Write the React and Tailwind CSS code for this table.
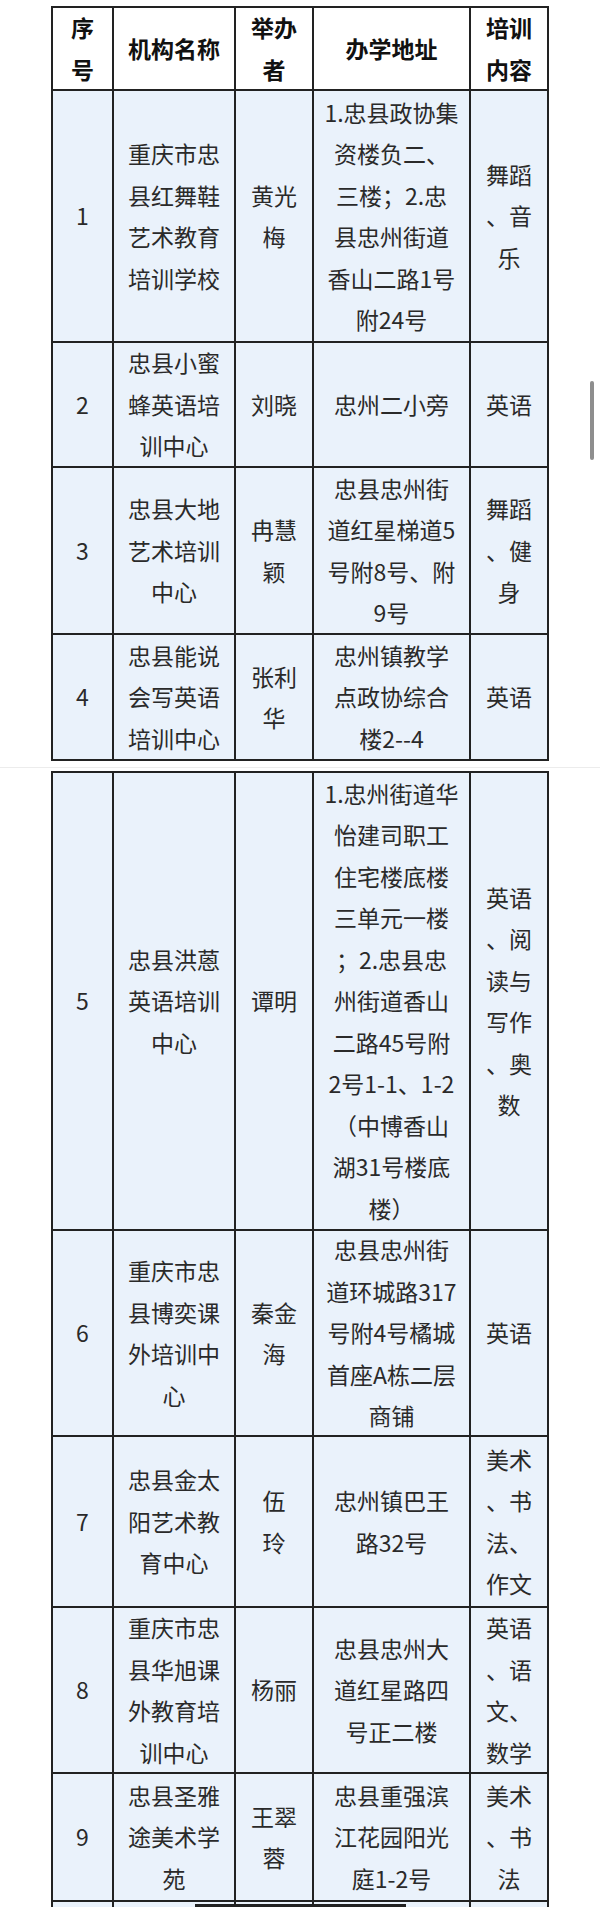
import React from 'react';

// Columns: 序号 / 机构名称 / 举办者 / 办学地址 / 培训内容
const HEADER = [['序', '号'], ['机构名称'], ['举办', '者'], ['办学地址'], ['培训', '内容']];

// First screenshot block (rows 1-4)
const ROWS_TOP = [
  {
    h: 'h-[250px]',
    cells: [
      ['1'],
      ['重庆市忠', '县红舞鞋', '艺术教育', '培训学校'],
      ['黄光', '梅'],
      ['1.忠县政协集', '资楼负二、', '三楼；2.忠', '县忠州街道', '香山二路1号', '附24号'],
      ['舞蹈', '、音', '乐'],
    ],
  },
  {
    h: 'h-[123px]',
    cells: [['2'], ['忠县小蜜', '蜂英语培', '训中心'], ['刘晓'], ['忠州二小旁'], ['英语']],
  },
  {
    h: 'h-[165px]',
    cells: [
      ['3'],
      ['忠县大地', '艺术培训', '中心'],
      ['冉慧', '颖'],
      ['忠县忠州街', '道红星梯道5', '号附8号、附', '9号'],
      ['舞蹈', '、健', '身'],
    ],
  },
  {
    h: 'h-[124px]',
    cells: [
      ['4'],
      ['忠县能说', '会写英语', '培训中心'],
      ['张利', '华'],
      ['忠州镇教学', '点政协综合', '楼2--4'],
      ['英语'],
    ],
  },
];

// Second screenshot block (rows 5-9)
const ROWS_BOTTOM = [
  {
    h: 'h-[456px]',
    cells: [
      ['5'],
      ['忠县洪蒽', '英语培训', '中心'],
      ['谭明'],
      [
        '1.忠州街道华',
        '怡建司职工',
        '住宅楼底楼',
        '三单元一楼',
        '；2.忠县忠',
        '州街道香山',
        '二路45号附',
        '2号1-1、1-2',
        '（中博香山',
        '湖31号楼底',
        '楼）',
      ],
      ['英语', '、阅', '读与', '写作', '、奥', '数'],
    ],
  },
  {
    h: 'h-[204px]',
    cells: [
      ['6'],
      ['重庆市忠', '县博奕课', '外培训中', '心'],
      ['秦金', '海'],
      ['忠县忠州街', '道环城路317', '号附4号橘城', '首座A栋二层', '商铺'],
      ['英语'],
    ],
  },
  {
    h: 'h-[169px]',
    cells: [
      ['7'],
      ['忠县金太', '阳艺术教', '育中心'],
      ['伍', '玲'],
      ['忠州镇巴王', '路32号'],
      ['美术', '、书', '法、', '作文'],
    ],
  },
  {
    h: 'h-[164px]',
    cells: [
      ['8'],
      ['重庆市忠', '县华旭课', '外教育培', '训中心'],
      ['杨丽'],
      ['忠县忠州大', '道红星路四', '号正二楼'],
      ['英语', '、语', '文、', '数学'],
    ],
  },
  {
    h: 'h-[126px]',
    cells: [
      ['9'],
      ['忠县圣雅', '途美术学', '苑'],
      ['王翠', '蓉'],
      ['忠县重强滨', '江花园阳光', '庭1-2号'],
      ['美术', '、书', '法'],
    ],
  },
];

function Cell({ lines, h, head }) {
  return (
    <div
      className={`${h} flex flex-col items-center justify-center ${
        head ? 'bg-white text-[#111] font-bold' : 'bg-[#eaf2fb] text-[#2a2a2a]'
      }`}
    >
      {lines.map((line, i) => (
        <div key={i} className="leading-[41.5px] whitespace-nowrap">
          {line}
        </div>
      ))}
    </div>
  );
}

function Block({ rows, header, tail }) {
  return (
    <div
      className={`ml-[51px] w-[498px] bg-[#222] grid grid-cols-[59px_120px_76px_155px_76px] gap-[2px] ${
        tail ? 'pt-[2px] px-[2px]' : 'p-[2px]'
      }`}
    >
      {header && HEADER.map((lines, i) => <Cell key={`h${i}`} lines={lines} h="h-[81px]" head />)}
      {rows.map((row, r) =>
        row.cells.map((lines, c) => <Cell key={`${r}-${c}`} lines={lines} h={row.h} />)
      )}
      {tail && [0, 1, 2, 3, 4].map((c) => <div key={`t${c}`} className="h-[8px] bg-[#eaf2fb]" />)}
    </div>
  );
}

export default function App() {
  return (
    <div className="relative w-[600px] h-[1907px] overflow-hidden bg-white font-['Noto_Sans_CJK_SC','Noto_Sans',sans-serif] text-[23px]">
      <div className="h-[6px]" />
      <Block rows={ROWS_TOP} header />

      {/* stitched screenshot seam */}
      <div className="h-[10px] flex flex-col">
        <div className="h-[6px]" />
        <div className="h-px bg-[#ececec]" />
      </div>

      <Block rows={ROWS_BOTTOM} tail />

      {/* cut-off content of the next row */}
      <div className="absolute left-[195px] top-[1904px] w-[211px] h-[3px] bg-[#222]" />

      {/* iOS scroll indicator */}
      <div className="absolute left-[590px] top-[381px] w-[4px] h-[79px] rounded-full bg-[#8e8e8e]" />
    </div>
  );
}
